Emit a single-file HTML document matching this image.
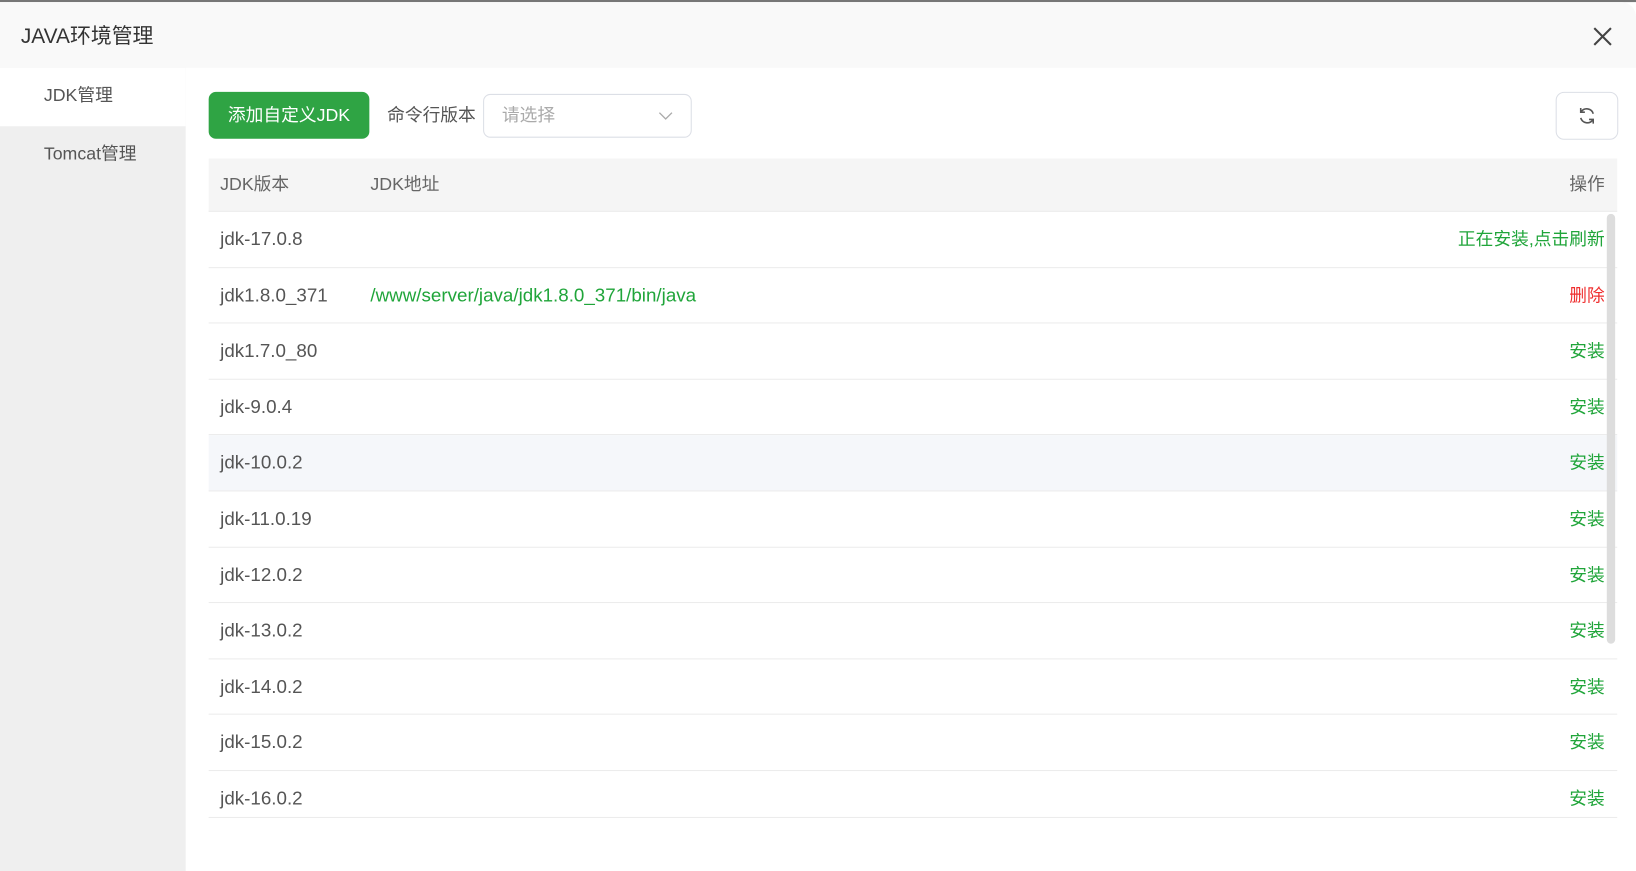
<!DOCTYPE html>
<html><head><meta charset="utf-8"><style>
html,body{margin:0;padding:0;width:1636px;height:871px;overflow:hidden;background:#fff;}
#w{position:absolute;left:0;top:0;width:1568px;height:835px;transform:scale(1.04337);transform-origin:0 0;font-family:"Liberation Sans","Noto Sans CJK SC",sans-serif;color:#555;}
.top{position:absolute;left:0;top:0;width:1568px;height:2px;background:#777;}
.hd{position:absolute;left:0;top:2px;width:1568px;height:63px;background:#f9f9f9;border-top-right-radius:14px;}
.hd .t{position:absolute;left:20px;top:19px;font-size:20px;color:#333;line-height:28px;}
.side{position:absolute;left:0;top:65px;width:178px;height:770px;background:#efefef;}
.side div{height:56px;line-height:54px;font-size:17px;color:#555;padding-left:42px;}
.side .a{background:#fff;}
.btn{position:absolute;left:200px;top:88px;width:154px;height:45px;background:#2fa444;border-radius:7px;color:#fff;font-size:17px;line-height:45px;text-align:center;}
.lbl{position:absolute;left:371px;top:97px;font-size:17px;color:#555;line-height:28px;}
.sel{position:absolute;left:463px;top:90px;width:198px;height:40px;border:1px solid #dcdfe6;border-radius:7px;}
.sel span{position:absolute;left:17px;top:6px;font-size:17px;color:#aaa;line-height:28px;}
.ref{position:absolute;left:1491px;top:88px;width:58px;height:44px;border:1px solid #dcdfe6;border-radius:8px;}
.tbl{position:absolute;left:200px;top:152px;width:1350px;}
.row{position:relative;height:52.6px;line-height:53px;border-bottom:1px solid #ececec;font-size:18px;}
.row span{position:absolute;top:0;}
.v{left:11px;color:#555;}
.p{left:155px;color:#20a53a;}
.o{right:12px;color:#20a53a;font-size:17px;}
.th{background:#f5f5f5;height:50px;line-height:50px;}
.th span{color:#666;font-size:17px;}
.sb{position:absolute;left:1540px;top:205px;width:8px;height:412px;background:#ddd;border-radius:4px;}
</style></head><body><div id="w">
<div class="top"></div>
<div class="hd"><div class="t">JAVA环境管理</div>
<svg style="position:absolute;left:1526px;top:23px" width="20" height="20" viewBox="0 0 20 20"><path d="M2 2L18 18M18 2L2 18" stroke="#444" stroke-width="2" fill="none"/></svg></div>
<div class="side"><div class="a">JDK管理</div><div>Tomcat管理</div></div>
<div class="btn">添加自定义JDK</div>
<div class="lbl">命令行版本</div>
<div class="sel"><span>请选择</span><svg style="position:absolute;left:167px;top:15px" width="14" height="10" viewBox="0 0 14 10"><path d="M1 2L7 8L13 2" stroke="#aaa" stroke-width="1.3" fill="none"/></svg></div>
<div class="ref"><svg style="position:absolute;left:19px;top:12px" width="20" height="20" viewBox="0 0 20 20"><path d="M16 8A6.5 6.5 0 0 0 4.5 6M4 12A6.5 6.5 0 0 0 15.5 14" stroke="#555" stroke-width="1.5" fill="none"/><path d="M4 2.5V6.5H8M16 17.5V13.5H12" stroke="#555" stroke-width="1.5" fill="none"/></svg></div>
<div class="tbl">
<div class="row th"><span class="v">JDK版本</span><span class="p" style="color:#666">JDK地址</span><span class="o" style="color:#666">操作</span></div>
<div class="row"><span class="v">jdk-17.0.8</span><span class="o">正在安装,点击刷新</span></div>
<div class="row"><span class="v">jdk1.8.0_371</span><span class="p">/www/server/java/jdk1.8.0_371/bin/java</span><span class="o" style="color:#ef2f2f">删除</span></div>
<div class="row"><span class="v">jdk1.7.0_80</span><span class="o">安装</span></div>
<div class="row"><span class="v">jdk-9.0.4</span><span class="o">安装</span></div>
<div class="row" style="background:#f5f7fa"><span class="v">jdk-10.0.2</span><span class="o">安装</span></div>
<div class="row"><span class="v">jdk-11.0.19</span><span class="o">安装</span></div>
<div class="row"><span class="v">jdk-12.0.2</span><span class="o">安装</span></div>
<div class="row"><span class="v">jdk-13.0.2</span><span class="o">安装</span></div>
<div class="row"><span class="v">jdk-14.0.2</span><span class="o">安装</span></div>
<div class="row"><span class="v">jdk-15.0.2</span><span class="o">安装</span></div>
<div class="row" style="height:44px"><span class="v">jdk-16.0.2</span><span class="o">安装</span></div>
</div>
<div class="sb"></div>
</div></body></html>
